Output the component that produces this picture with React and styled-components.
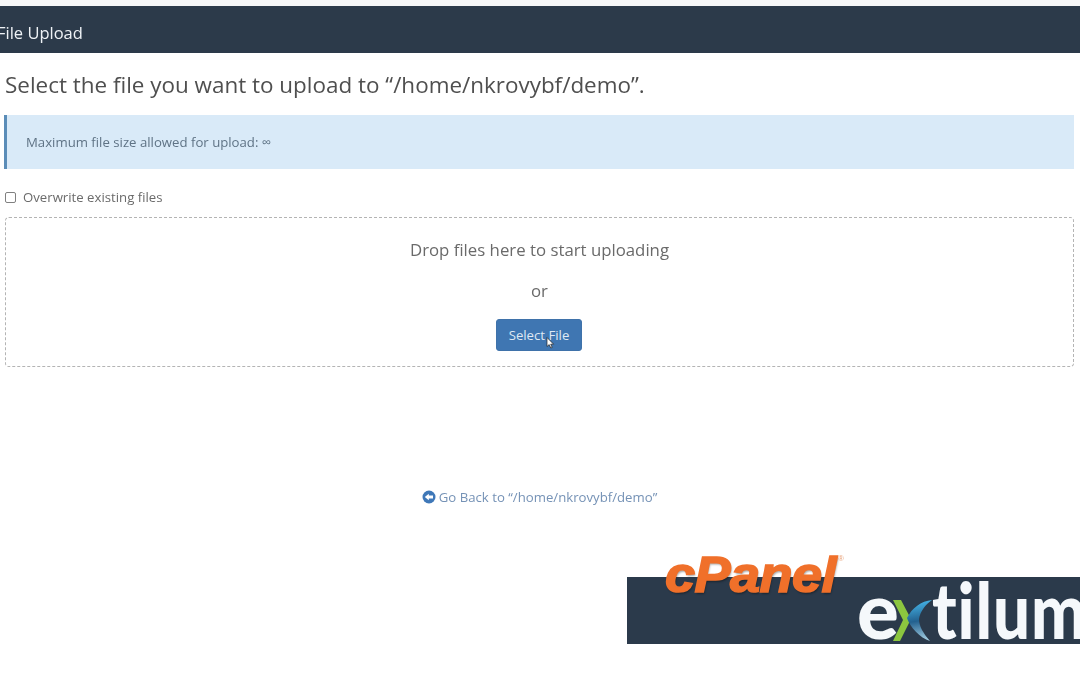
import React from 'react';
import styled, { createGlobalStyle } from 'styled-components';

const GlobalStyle = createGlobalStyle`
  html, body {
    margin: 0;
    padding: 0;
    background: #fff;
    overflow: hidden;
  }
  body {
    font-family: "Open Sans", "Noto Sans", sans-serif;
  }
`;

const Page = styled.div`
  width: 1080px;
  height: 675px;
  overflow: hidden;
  display: flex;
  flex-direction: column;
  filter: blur(0.4px);
`;

const TopStrip = styled.div`
  height: 6px;
  background: #f6f7f8;
`;

const TitleBar = styled.header`
  height: 47px;
  box-sizing: border-box;
  padding-top: 3px;
  background: #2c3a4a;
  color: #eef2f6;
  font-size: 16.5px;
  line-height: 47px;
  text-indent: -3px;
`;

const Content = styled.main`
  padding: 0 6px 0 5px;
  display: flex;
  flex-direction: column;
`;

const Heading = styled.h1`
  margin: 17px 0 0;
  font-size: 22.45px;
  line-height: 30px;
  font-weight: 400;
  color: #4f4f4f;
`;

const Notice = styled.div`
  margin: 15px 0 0 -1px;
  height: 54px;
  box-sizing: border-box;
  background: #d9eaf8;
  border-left: 3px solid #5b8db8;
  padding-left: 19px;
  display: flex;
  align-items: center;
  font-size: 13.2px;
  color: #5f7385;
`;

const CheckRow = styled.label`
  margin-top: 18px;
  height: 19px;
  display: flex;
  align-items: center;
  font-size: 13.2px;
  color: #6b6b6b;
`;

const CheckBox = styled.span`
  width: 9px;
  height: 9px;
  margin-top: 1px;
  border: 1px solid #808080;
  border-radius: 2px;
  background: #fff;
  margin-right: 7px;
  flex: none;
`;

const DropZone = styled.section`
  margin-top: 11px;
  height: 150px;
  box-sizing: border-box;
  border: 1.5px dashed #b4b4b4;
  border-radius: 4px;
  display: flex;
  flex-direction: column;
  align-items: center;
  padding-top: 20px;
`;

const DropText = styled.div`
  font-size: 16.8px;
  line-height: 24px;
  color: #6a6a6a;
`;

const OrText = styled(DropText)`
  margin-top: 17px;
`;

const SelectButton = styled.button`
  position: relative;
  margin-top: 16px;
  margin-right: 1px;
  width: 86px;
  height: 32px;
  padding: 0;
  border: 1px solid #3f72aa;
  border-radius: 3px;
  background: #3f76b2;
  color: #dfe9f4;
  font-family: inherit;
  font-size: 13.2px;
`;

const Cursor = styled.svg`
  position: absolute;
  left: 49px;
  top: 17px;
`;

const BackLink = styled.a`
  margin-top: 120px;
  align-self: center;
  display: flex;
  align-items: center;
  gap: 3px;
  font-size: 13.2px;
  line-height: 20px;
  color: #7592b6;
`;

const LogoBlock = styled.div`
  position: relative;
  margin: 70px 0 0 627px;
  width: 453px;
  height: 67px;
  background: #2b3a4b;
`;

const PanelWord = styled.span`
  position: absolute;
  left: 38px;
  top: -32px;
  font-family: "Liberation Sans", sans-serif;
  font-weight: 700;
  font-style: italic;
  font-size: 50px;
  line-height: 60px;
  letter-spacing: -0.5px;
  color: #f0702a;
  text-shadow: 1px 2px 2px rgba(0, 0, 0, 0.35);
  -webkit-text-stroke: 1.6px #f0702a;
  transform: scaleX(1.08);
  transform-origin: left center;
`;

const Registered = styled.span`
  position: absolute;
  left: 211px;
  top: -23px;
  font-family: "Liberation Sans", sans-serif;
  font-size: 8px;
  color: #e8a27a;
`;

const ExtilumWord = styled.div`
  position: absolute;
  left: 230px;
  top: -7px;
  display: flex;
  align-items: flex-start;
  font-family: Lato, "Open Sans", sans-serif;
  font-weight: 900;
  font-size: 78px;
  line-height: 78px;
  color: #f5f8fb;
  white-space: nowrap;
`;

const XMark = styled.svg`
  margin: 30px -1px 0 -6px;
  flex: none;
`;

const Rest = styled.span`
  display: inline-block;
  letter-spacing: 1px;
  transform: scaleX(0.84);
  transform-origin: left center;
`;

function BackIcon() {
  return (
    <svg width="14" height="14" viewBox="0 0 14 14">
      <circle cx="7" cy="7" r="6.5" fill="#3f78b8" />
      <path d="M2.8 7 L6.8 3.8 V5.6 H11 V8.4 H6.8 V10.2 Z" fill="#fff" />
    </svg>
  );
}

function App() {
  return (
    <Page>
      <GlobalStyle />
      <TopStrip />
      <TitleBar>File Upload</TitleBar>
      <Content>
        <Heading>Select the file you want to upload to “/home/nkrovybf/demo”.</Heading>
        <Notice>Maximum file size allowed for upload: ∞</Notice>
        <CheckRow>
          <CheckBox />
          Overwrite existing files
        </CheckRow>
        <DropZone>
          <DropText>Drop files here to start uploading</DropText>
          <OrText>or</OrText>
          <SelectButton>
            Select File
            <Cursor width="9" height="12" viewBox="0 0 9 12">
              <path d="M1 0.5 V9.5 L3.2 7.6 L4.8 11 L6.2 10.4 L4.7 7.2 H7.6 Z" fill="#fff" stroke="#222" strokeWidth="0.7" />
            </Cursor>
          </SelectButton>
        </DropZone>
        <BackLink>
          <BackIcon />
          Go Back to “/home/nkrovybf/demo”
        </BackLink>
      </Content>
      <LogoBlock>
        <PanelWord>cPanel</PanelWord>
        <Registered>®</Registered>
        <ExtilumWord>
          e
          <XMark width="40" height="41" viewBox="0 0 40 41">
            <defs>
              <linearGradient id="blade" x1="0.5" y1="0" x2="0.6" y2="1">
                <stop offset="0" stopColor="#45b6ea" />
                <stop offset="0.5" stopColor="#23618f" />
                <stop offset="1" stopColor="#a5cfe2" />
              </linearGradient>
            </defs>
            <path d="M0 0 H8 L18 19 L7 41 H0 L10 20 Z" fill="#8cc63f" />
            <path d="M39 0 C28 1 19 8 14 18 C17 27 27 38 37 41 C30 33 26 26 26 19 C27 12 32 5 39 0 Z" fill="url(#blade)" />
          </XMark>
          <Rest>tilum</Rest>
        </ExtilumWord>
      </LogoBlock>
    </Page>
  );
}

export default App;
